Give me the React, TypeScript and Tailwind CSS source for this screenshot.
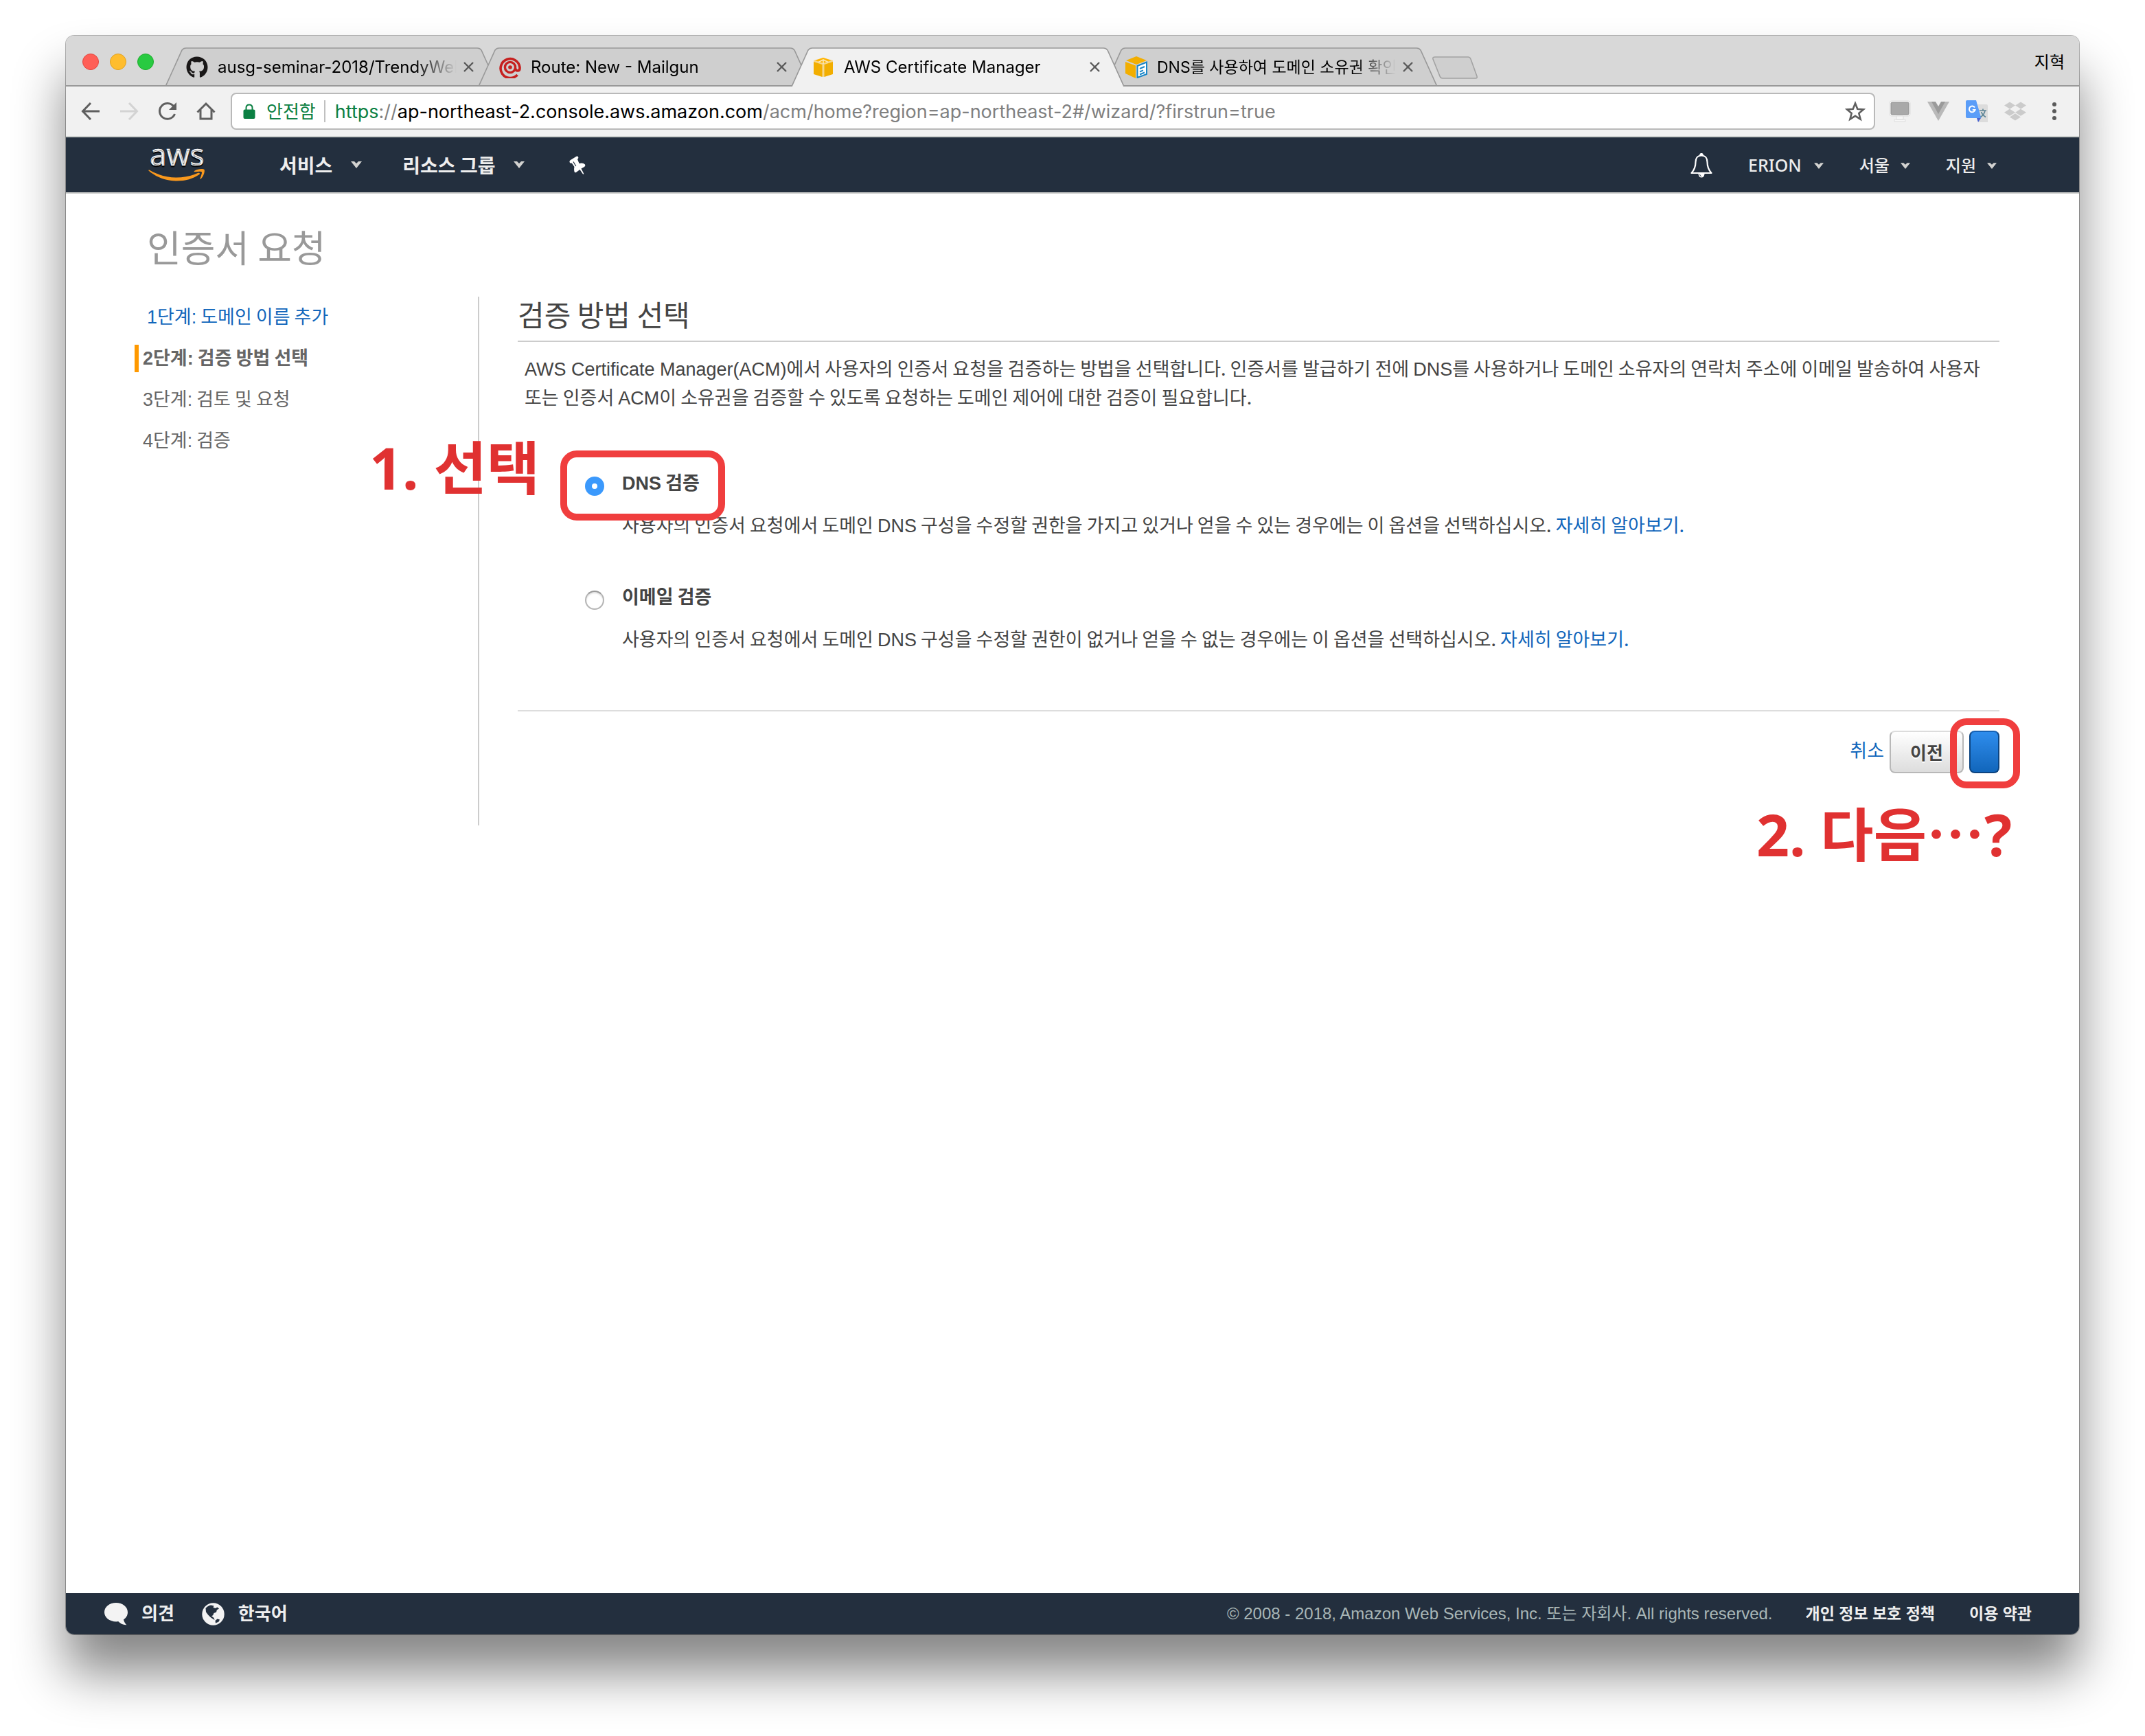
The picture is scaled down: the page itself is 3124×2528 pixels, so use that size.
import type { ReactNode } from 'react';
import { FaGithub, FaDropbox } from 'react-icons/fa';

function TabShape({ active }: { active?: boolean }) {
  return (
    <svg viewBox="0 0 484 57" preserveAspectRatio="none" className="absolute inset-0 size-full" aria-hidden="true">
      <path
        d="M0 57 L24 4 Q26 1 30 1 H454 Q458 1 460 4 L484 57 Z"
        className={active ? 'fill-[#f1f1f1]' : 'fill-[#cfcfcf]'}
      />
      <path
        d="M0 57 L24 4 Q26 1 30 1 H454 Q458 1 460 4 L484 57"
        fill="none"
        stroke="#999999"
        strokeWidth="1.6"
      />
      {!active && <path d="M0 56 H484" stroke="#999999" strokeWidth="2" />}
    </svg>
  );
}

function Tab({
  icon,
  title,
  active,
  small,
}: {
  icon: ReactNode;
  title: string;
  active?: boolean;
  small?: boolean;
}) {
  return (
    <div
      role="tab"
      aria-selected={!!active}
      className={'relative -ml-7 h-[57px] w-[484px] first:ml-0 ' + (active ? 'z-10' : 'z-0')}
    >
      <TabShape active={active} />
      <div className="relative flex h-full items-center pr-[35px] pl-[30px]">
        <span className="flex size-8 shrink-0 items-center justify-center">{icon}</span>
        <span
          className={
            'ml-3.5 flex-1 overflow-hidden whitespace-nowrap leading-8 text-black [mask-image:linear-gradient(to_right,black_calc(100%-60px),transparent)] ' +
            (small ? 'text-[23px]' : 'text-[24px]')
          }
        >
          {title}
        </span>
        <button type="button" aria-label="탭 닫기" className="ml-2.5 shrink-0">
          <svg viewBox="0 0 15 15" className="size-[15px]" stroke="#5a5a5a" strokeWidth="2.4">
            <path d="M1 1 L14 14 M14 1 L1 14" />
          </svg>
        </button>
      </div>
    </div>
  );
}

function MailgunIcon() {
  return (
    <svg viewBox="0 0 32 32" className="size-8" fill="none" stroke="#c6201f">
      <path d="M26.5 27 A14 14 0 1 1 30 16 V17.5 Q30 21 26.8 21 Q23.8 21 23.8 17.5" strokeWidth="3.6" />
      <circle cx="16" cy="16" r="7.6" strokeWidth="3.4" />
      <circle cx="16" cy="16" r="2.8" fill="#c6201f" stroke="none" />
    </svg>
  );
}

function CubeIcon() {
  return (
    <svg viewBox="0 0 28 28" className="size-7">
      <path d="M14 0 L28 4 V23 L14 28 L0 23 V4 Z" fill="#f6d68a" />
      <path d="M14 0 L26 4 L14 8 L2 4 Z" fill="#ffb400" />
      <path d="M0 6 L12.5 10 V28 L0 24 Z" fill="#f2ae00" />
      <path d="M28 6 L15.5 10 V28 L28 24 Z" fill="#f2ae00" />
      <path d="M14 3 V9 M7 6.5 L14 3 L21 6.5" stroke="#fbe6b5" strokeWidth="1.6" fill="none" />
    </svg>
  );
}

function DocCubeIcon() {
  return (
    <svg viewBox="0 0 32 32" className="size-8">
      <path d="M16 0 L31 6 L16 12 L1 6 Z" fill="#f2ae00" />
      <path d="M0 8 L15 13.5 V32 L0 25 Z" fill="#f2ae00" />
      <path d="M17.5 14 L31 8.5 V26 L17.5 31 Z" fill="#ffffff" stroke="#1a86c7" strokeWidth="2" />
      <path d="M21 18 L28 15 M21 22.5 L26 20.3 M21 26.5 L28 23.5" stroke="#1a86c7" strokeWidth="2" />
    </svg>
  );
}

function Caret({ large }: { large?: boolean }) {
  return (
    <svg viewBox="0 0 16 10" className={large ? 'h-2.5 w-[18px]' : 'h-[9px] w-3.5'} aria-hidden="true">
      <path d="M0 0 H5 L8 3 L11 0 H16 L8 10 Z" fill="#d2d2d0" />
    </svg>
  );
}

function AwsLogo() {
  return (
    <svg viewBox="0 0 84 56" className="h-14 w-[84px] overflow-visible" aria-label="aws">
      <text
        x="2"
        y="29"
        fontSize="44"
        fill="#ffffff"
        stroke="#ffffff"
        strokeWidth="0.6"
        className="font-['Open_Sans','Noto_Sans',sans-serif]"
      >
        aws
      </text>
      <g fill="#f8981d">
        <path d="M0.5 36.5 C-0.3 35.5 0.8 35 2 35.8 C25 49.5 52 49 72 40 C74.5 39 76 41 74 42.3 C55 55.5 22 55.5 0.5 36.5 Z" />
        <path d="M67 37 C72 33.5 80 33.5 81.5 35 C83 37 80 46 76.5 48.5 C75.5 49 75 48.6 75.5 47.5 C77 44 78.5 39.5 77.8 38.5 C76.8 37.3 72 37.8 68 38.3 C66.6 38.4 66.3 37.7 67 37 Z" />
      </g>
    </svg>
  );
}

function PinIcon() {
  return (
    <svg viewBox="0 0 24 27" className="h-[27px] w-6" aria-hidden="true">
      <path
        d="M1 10 Q-0.5 7.5 2 6 L10.5 0.8 Q12.5 0 13.2 2 Q13.8 3.6 12 4.8 L14.5 11 Q20 9.5 23 12.5 Q24 14.5 22 16 L17.5 18.5 L21.3 26 Q20.8 27 20 26.6 L15.5 20 L10 24 Q7.5 24.8 7.3 22 Q6.8 18.5 7.5 16 L3.8 10.4 Q2 11 1 10 Z"
        fill="#ffffff"
      />
      <path d="M6 8.5 L9.8 15" stroke="#232f3e" strokeWidth="1.2" />
    </svg>
  );
}

function BellIcon() {
  return (
    <svg viewBox="0 0 32 36" className="h-9 w-8" fill="none" stroke="#ffffff" strokeWidth="2.2" strokeLinejoin="round">
      <path d="M16 3.5 C9.5 3.5 7.5 8.5 7.5 13 C7.5 20 6 24 1.5 29 H30.5 C26 24 24.5 20 24.5 13 C24.5 8.5 22.5 3.5 16 3.5 Z" />
      <path d="M14.2 3 Q14.2 1 16 1 Q17.8 1 17.8 3" fill="#ffffff" />
      <path d="M11.5 30 Q12 35.5 16 35.5 Q20 35.5 20.5 30 Z" fill="#ffffff" stroke="none" />
      <path d="M13.5 31 Q14 33.5 16 33.8" stroke="#232f3e" strokeWidth="1" />
    </svg>
  );
}

function BrowserTabs() {
  return (
    <div className="flex h-[74px] items-end border-b-2 border-[#999999] bg-[#d8d8d8]">
      <div className="flex h-full items-center gap-4 pt-1 pl-6">
        <button type="button" aria-label="닫기" className="size-6 rounded-full border border-[#e2463f] bg-[#ff5f57]" />
        <button type="button" aria-label="최소화" className="size-6 rounded-full border border-[#dfa123] bg-[#ffbd2e]" />
        <button type="button" aria-label="최대화" className="size-6 rounded-full border border-[#1dad2b] bg-[#28ca41]" />
      </div>
      <div role="tablist" className="-mb-0.5 ml-[17px] flex items-end">
        <Tab icon={<FaGithub className="size-8 text-[#191717]" />} title="ausg-seminar-2018/TrendyWebApp" />
        <Tab icon={<MailgunIcon />} title="Route: New - Mailgun" />
        <Tab icon={<CubeIcon />} title="AWS Certificate Manager" active />
        <Tab icon={<DocCubeIcon />} title="DNS를 사용하여 도메인 소유권 확인" small />
      </div>
      <button type="button" aria-label="새 탭" className="mb-2 -ml-2">
        <svg viewBox="0 0 68 34" className="h-[34px] w-[68px]">
          <path
            d="M5 1 H53 Q56 1 57 4 L66 29 Q67 32 64 32 H16 Q13 32 12 29 L2 4 Q1 1 5 1 Z"
            fill="#cfcfcf"
            stroke="#a3a3a3"
            strokeWidth="1.6"
          />
        </svg>
      </button>
      <div className="flex h-full flex-1 items-center justify-end pt-1.5 pr-[21px] text-[24px] text-black">지혁</div>
    </div>
  );
}

function BrowserToolbar() {
  return (
    <div className="flex h-[74px] items-center border-b-2 border-[#cfd2d0] bg-[#f1f1f1] pr-[33px] pl-[22px]">
      <div className="flex items-center gap-7">
        <button type="button" aria-label="뒤로">
          <svg viewBox="0 0 28 28" className="size-7" fill="none" stroke="#5f5f5f" strokeWidth="3">
            <path d="M14 2 L2.5 14 L14 26 M3 14 H27" />
          </svg>
        </button>
        <button type="button" aria-label="앞으로">
          <svg viewBox="0 0 28 28" className="size-7" fill="none" stroke="#d3d3d3" strokeWidth="3">
            <path d="M14 2 L25.5 14 L14 26 M25 14 H1" />
          </svg>
        </button>
        <button type="button" aria-label="새로고침">
          <svg viewBox="0 0 28 28" className="size-7" fill="none" stroke="#5f5f5f" strokeWidth="3">
            <path d="M24.5 18 A11.4 11.4 0 1 1 23 7" />
            <path d="M27 1 V12 H16 Z" fill="#5f5f5f" stroke="none" />
          </svg>
        </button>
        <button type="button" aria-label="홈">
          <svg viewBox="0 0 28 28" className="size-7" fill="none" stroke="#5f5f5f" strokeWidth="3">
            <path d="M1.5 15.5 L14 3 L26.5 15.5" />
            <path d="M6 12 V25 H22 V12" />
          </svg>
        </button>
      </div>
      <div className="ml-[22px] flex h-[54px] flex-1 items-center rounded-lg border-2 border-[#b9b9b9] bg-white pr-3 pl-4">
        <svg viewBox="0 0 18 22" className="h-[22px] w-[18px]" aria-hidden="true">
          <rect x="0.5" y="8.5" width="17" height="13.5" rx="2" fill="#0b8043" />
          <path d="M4.5 9 V6 Q4.5 1.5 9 1.5 Q13.5 1.5 13.5 6 V9" fill="none" stroke="#0b8043" strokeWidth="2" />
        </svg>
        <span className="ml-4 pt-0.5 text-[26px] leading-8 text-[#0b8043]">안전함</span>
        <span className="ml-3 h-8 w-0.5 bg-[#c0c0c0]" />
        <a
          href="#/wizard/"
          className="ml-3.5 flex-1 overflow-hidden pt-0.5 text-[27px] leading-9 whitespace-nowrap text-[#808080]"
        >
          <span className="text-[#0b8043]">https</span>://
          <span className="text-black">ap-northeast-2.console.aws.amazon.com</span>
          /acm/home?region=ap-northeast-2#/wizard/?firstrun=true
        </a>
        <button type="button" aria-label="북마크">
          <svg viewBox="0 0 30 30" className="size-[30px]" fill="none" stroke="#5f5f5f" strokeWidth="2.6">
            <path d="M15 3.5 L18.3 11.8 L27 12.4 L20.3 18 L22.6 26.6 L15 21.9 L7.4 26.6 L9.7 18 L3 12.4 L11.7 11.8 Z" />
          </svg>
        </button>
      </div>
      <div className="ml-5 flex items-center gap-6">
        <button type="button" aria-label="화면 확장 프로그램">
          <svg viewBox="0 0 32 32" className="size-8">
            <rect x="1" y="1" width="30" height="22" rx="3" fill="#ffffff" stroke="#dddddd" />
            <rect x="3" y="3" width="26" height="18" rx="1.5" fill="#a9a9a9" stroke="#8f8f8f" />
            <path d="M11 23 H21 V28 H11 Z M8 28 H24 V31 H8 Z" fill="#f6f6f6" stroke="#dddddd" />
          </svg>
        </button>
        <button type="button" aria-label="Vue 확장 프로그램">
          <svg viewBox="0 0 32 32" className="size-8">
            <path d="M0 2 H32 L16 30 Z" fill="#b9b9b9" />
            <path d="M6 2 H26 L16 20 Z" fill="#9a9a9a" />
            <path d="M12 2 H20 L16 9 Z" fill="#f1f1f1" />
          </svg>
        </button>
        <button type="button" aria-label="번역">
          <svg viewBox="0 0 32 32" className="size-8">
            <path d="M13 6 H30 Q32 6 32 8 V32 H19 Z" fill="#dcdcdc" />
            <path d="M16 26 H22 L18 32 Z" fill="#4a63d0" />
            <path d="M2 0 H15 L22.5 26 H2 Q0 26 0 24 V2 Q0 0 2 0 Z" fill="#5a9df8" />
            <path d="M13 10.5 A4.4 4.4 0 1 0 13.6 14 H9.8" fill="none" stroke="#ffffff" strokeWidth="2" />
            <path
              d="M20 15 H30 M25 12.5 V15 M28 15 Q27 21 21.5 24.5 M22.5 17 Q24.5 22 29 24.5"
              fill="none"
              stroke="#5d8596"
              strokeWidth="1.6"
            />
          </svg>
        </button>
        <button type="button" aria-label="Dropbox">
          <FaDropbox className="size-8 text-[#cbcbcb]" />
        </button>
      </div>
      <button type="button" aria-label="메뉴" className="ml-[38px]">
        <svg viewBox="0 0 6 28" className="h-7 w-1.5" fill="#5a5a5a">
          <circle cx="3" cy="4" r="3" />
          <circle cx="3" cy="14" r="3" />
          <circle cx="3" cy="24" r="3" />
        </svg>
      </button>
    </div>
  );
}

function ConsoleNav() {
  return (
    <header className="flex h-[82px] items-center border-b-2 border-[#c9cbc9] bg-[#232f3e] pr-[120px] pl-[120px] text-[#eeeeee] [text-shadow:0_2px_1px_#000]">
      <a href="#home">
        <AwsLogo />
      </a>
      <nav className="ml-[107px] flex items-center gap-[58px] font-['Noto_Sans_CJK_KR',sans-serif] text-[28px] font-bold">
        <button type="button" className="flex items-center gap-[26px]">
          서비스 <Caret large />
        </button>
        <button type="button" className="flex items-center gap-[26px]">
          리소스 그룹 <Caret large />
        </button>
        <button type="button" aria-label="고정" className="ml-1.5">
          <PinIcon />
        </button>
      </nav>
      <div className="ml-auto flex items-center gap-[52px] pt-0.5 font-['Noto_Sans','Noto_Sans_CJK_KR',sans-serif] text-[24px] font-medium">
        <button type="button" aria-label="알림">
          <BellIcon />
        </button>
        <button type="button" className="flex items-center gap-[18px] text-[25px]">
          ERION <Caret />
        </button>
        <button type="button" className="flex items-center gap-4">
          서울 <Caret />
        </button>
        <button type="button" className="flex items-center gap-4">
          지원 <Caret />
        </button>
      </div>
    </header>
  );
}

/** Sets the Latin runs of a Korean sentence in the Latin face. */
function Mixed({ children }: { children: string }) {
  return children.split(/([A-Za-z()0-9:][A-Za-z() ]*[A-Za-z()]|[0-9:])/).map((part, i) =>
    i % 2 === 1 ? (
      <span key={i} className="font-['Liberation_Sans',sans-serif] leading-none">
        {part}
      </span>
    ) : (
      part
    ),
  );
}

const steps = ['1단계: 도메인 이름 추가', '2단계: 검증 방법 선택', '3단계: 검토 및 요청', '4단계: 검증'];

function Steps() {
  return (
    <ol className="min-h-[770px] w-[502px] shrink-0 border-r-2 border-[#cccccc] text-[27px] leading-9 text-[#666666]">
      {steps.map((label, i) => (
        <li key={label} className="flex h-[60px] items-center">
          {i === 0 ? (
            <a href="#step-1" className="pb-1 pl-[18px] text-[#1166bb]">
              <Mixed>{label}</Mixed>
            </a>
          ) : i === 1 ? (
            <span aria-current="step" className="border-l-6 border-[#ff9900] pb-1 pl-1.5 font-bold">
              <Mixed>{label}</Mixed>
            </span>
          ) : (
            <span className="pb-1 pl-3">
              <Mixed>{label}</Mixed>
            </span>
          )}
        </li>
      ))}
    </ol>
  );
}

function Option({
  id,
  title,
  text,
  checked,
  children,
}: {
  id: string;
  title: string;
  text: string;
  checked?: boolean;
  children?: ReactNode;
}) {
  return (
    <div className="relative flex items-start pl-[98px]">
      <input
        id={id}
        type="radio"
        name="validation"
        defaultChecked={checked}
        className="mt-[13px] size-7 shrink-0 appearance-none rounded-full border-2 border-[#b5b5b5] border-t-[#9a9a9a] bg-white shadow-[inset_0_2px_2px_#e2e2e2] checked:border-10 checked:border-[#3b99fc] checked:shadow-none"
      />
      <div className="ml-[26px]">
        <label htmlFor={id} className="block font-bold">
          <Mixed>{title}</Mixed>
        </label>
        <p className="mt-5">
          <Mixed>{text}</Mixed>{' '}
          <a href="#learn-more" className="text-[#1166bb]">
            자세히 알아보기.
          </a>
        </p>
      </div>
      {children}
    </div>
  );
}

function ValidationForm() {
  return (
    <form className="mr-[116px] ml-14 flex-1 text-[27px] leading-[42px] text-[#444444]">
      <h2 className="border-b-2 border-[#cccccc] pb-3.5 text-[42px] leading-[50px]">검증 방법 선택</h2>
      <p className="mt-[17px] pl-2.5">
        <Mixed>
          AWS Certificate Manager(ACM)에서 사용자의 인증서 요청을 검증하는 방법을 선택합니다. 인증서를 발급하기 전에 DNS를 사용하거나 도메인 소유자의 연락처 주소에 이메일 발송하여 사용자
        </Mixed>
        <br />
        <Mixed>
          또는 인증서 ACM이 소유권을 검증할 수 있도록 요청하는 도메인 제어에 대한 검증이 필요합니다.
        </Mixed>
      </p>
      <fieldset className="mt-[82px] flex flex-col gap-[62px] border-b-2 border-[#dddddd] pb-[83px]">
        <legend className="sr-only">검증 방법</legend>
        <Option
          id="dns"
          title="DNS 검증"
          text="사용자의 인증서 요청에서 도메인 DNS 구성을 수정할 권한을 가지고 있거나 얻을 수 있는 경우에는 이 옵션을 선택하십시오."
          checked
        >
          <div className="pointer-events-none absolute -top-[25px] left-[62px] h-[102px] w-60 rounded-3xl border-10 border-[#f03e3e]">
            <p className="absolute -top-[37px] right-full mr-10 font-['Noto_Sans','Noto_Sans_CJK_KR',sans-serif] text-[84px] leading-[104px] font-bold whitespace-nowrap text-[#e03131]">
              1. 선택
            </p>
          </div>
        </Option>
        <Option
          id="email"
          title="이메일 검증"
          text="사용자의 인증서 요청에서 도메인 DNS 구성을 수정할 권한이 없거나 얻을 수 없는 경우에는 이 옵션을 선택하십시오."
        />
      </fieldset>
      <div className="mt-7 flex items-center justify-end gap-2">
        <a href="#cancel" className="mb-1.5 text-[#1166bb]">
          취소
        </a>
        <button
          type="button"
          className="h-[62px] w-[108px] rounded-lg border-2 border-[#b8b8b8] border-t-[#dcdcdc] bg-linear-to-b from-white to-[#dddddd] text-[26px] font-bold [text-shadow:0_2px_0_#fff]"
        >
          이전
        </button>
        <div className="relative flex">
          <button
            type="submit"
            aria-label="다음"
            className="h-[62px] w-11 rounded-lg border-2 border-[#0d4480] border-t-[#1562b5] bg-linear-to-b from-[#2e8ded] to-[#1166bb]"
          />
          <div className="pointer-events-none absolute -top-[18px] -left-7 h-[102px] w-[102px] rounded-3xl border-10 border-[#f03e3e]">
            <p className="absolute top-[107px] right-0.5 font-['Noto_Sans','Noto_Sans_CJK_KR',sans-serif] text-[84px] leading-[104px] font-bold whitespace-nowrap text-[#e03131]">
              2. 다음⋯?
            </p>
          </div>
        </div>
      </div>
    </form>
  );
}

function Footer() {
  return (
    <footer className="flex h-[60px] items-center bg-[#232f3e] pr-[69px] pl-14 font-['Liberation_Sans','Noto_Sans_CJK_KR',sans-serif] text-[26px] font-bold text-[#eeeeee]">
      <button type="button" className="flex items-center gap-5">
        <svg viewBox="0 0 34 33" className="h-[33px] w-[34px]" fill="#f3f3f3">
          <path d="M17 0 C26.5 0 34 6 34 13.8 C34 18.5 31.5 22.3 28 24.6 C28.5 27.5 30 30 32.4 32.2 C27.5 32.6 23 30 20.5 27.3 C8.5 28.6 0 22 0 13.8 C0 6 7.5 0 17 0 Z" />
        </svg>
        의견
      </button>
      <button type="button" className="ml-10 flex items-center gap-5">
        <svg viewBox="0 0 33 33" className="size-[33px]">
          <circle cx="16.5" cy="16.5" r="16.2" fill="#f3f3f3" />
          <path
            d="M5.5 8 C8 5 11 3.8 13.5 3.6 L17.5 4.4 L16.5 6.8 L19.5 8 L22.5 6.6 L25 8.6 L21.8 10.6 L21 13.8 L17.5 15 L16.2 18.3 L14 19.3 L17.5 22 L18.5 25 L16 23.5 L12.5 21 L9 17.5 L6 13.5 Z"
            fill="#232f3e"
          />
          <path d="M19.5 26 L22.5 23.6 L26 24.6 L24.6 27.6 L20 29.8 Z" fill="#232f3e" />
        </svg>
        한국어
      </button>
      <p className="ml-auto text-[24px] font-normal text-[#a9b7b7]">
        © 2008 - 2018, Amazon Web Services, Inc. 또는 자회사. All rights reserved.
      </p>
      <a href="#privacy" className="ml-12 text-[23px]">
        개인 정보 보호 정책
      </a>
      <a href="#terms" className="ml-[50px] text-[23px]">
        이용 약관
      </a>
    </footer>
  );
}

export default function App() {
  return (
    <div className="flex min-h-screen bg-white px-24 pt-[52px] pb-[148px]">
      <div className="flex flex-1 flex-col overflow-hidden rounded-xl bg-white font-['Inter','Noto_Sans_CJK_KR',sans-serif] shadow-[0_0_0_1px_rgba(0,0,0,0.3),0_56px_74px_rgba(0,0,0,0.48)]">
        <BrowserTabs />
        <BrowserToolbar />
        <ConsoleNav />
        <main className="flex flex-1 flex-col pl-[100px] font-['Noto_Sans_CJK_KR',sans-serif]">
          <h1 className="mt-[45px] pl-[18px] text-[54px] leading-[64px] text-[#999999]">인증서 요청</h1>
          <div className="mt-[41px] flex items-start">
            <Steps />
            <ValidationForm />
          </div>
        </main>
        <Footer />
      </div>
    </div>
  );
}
